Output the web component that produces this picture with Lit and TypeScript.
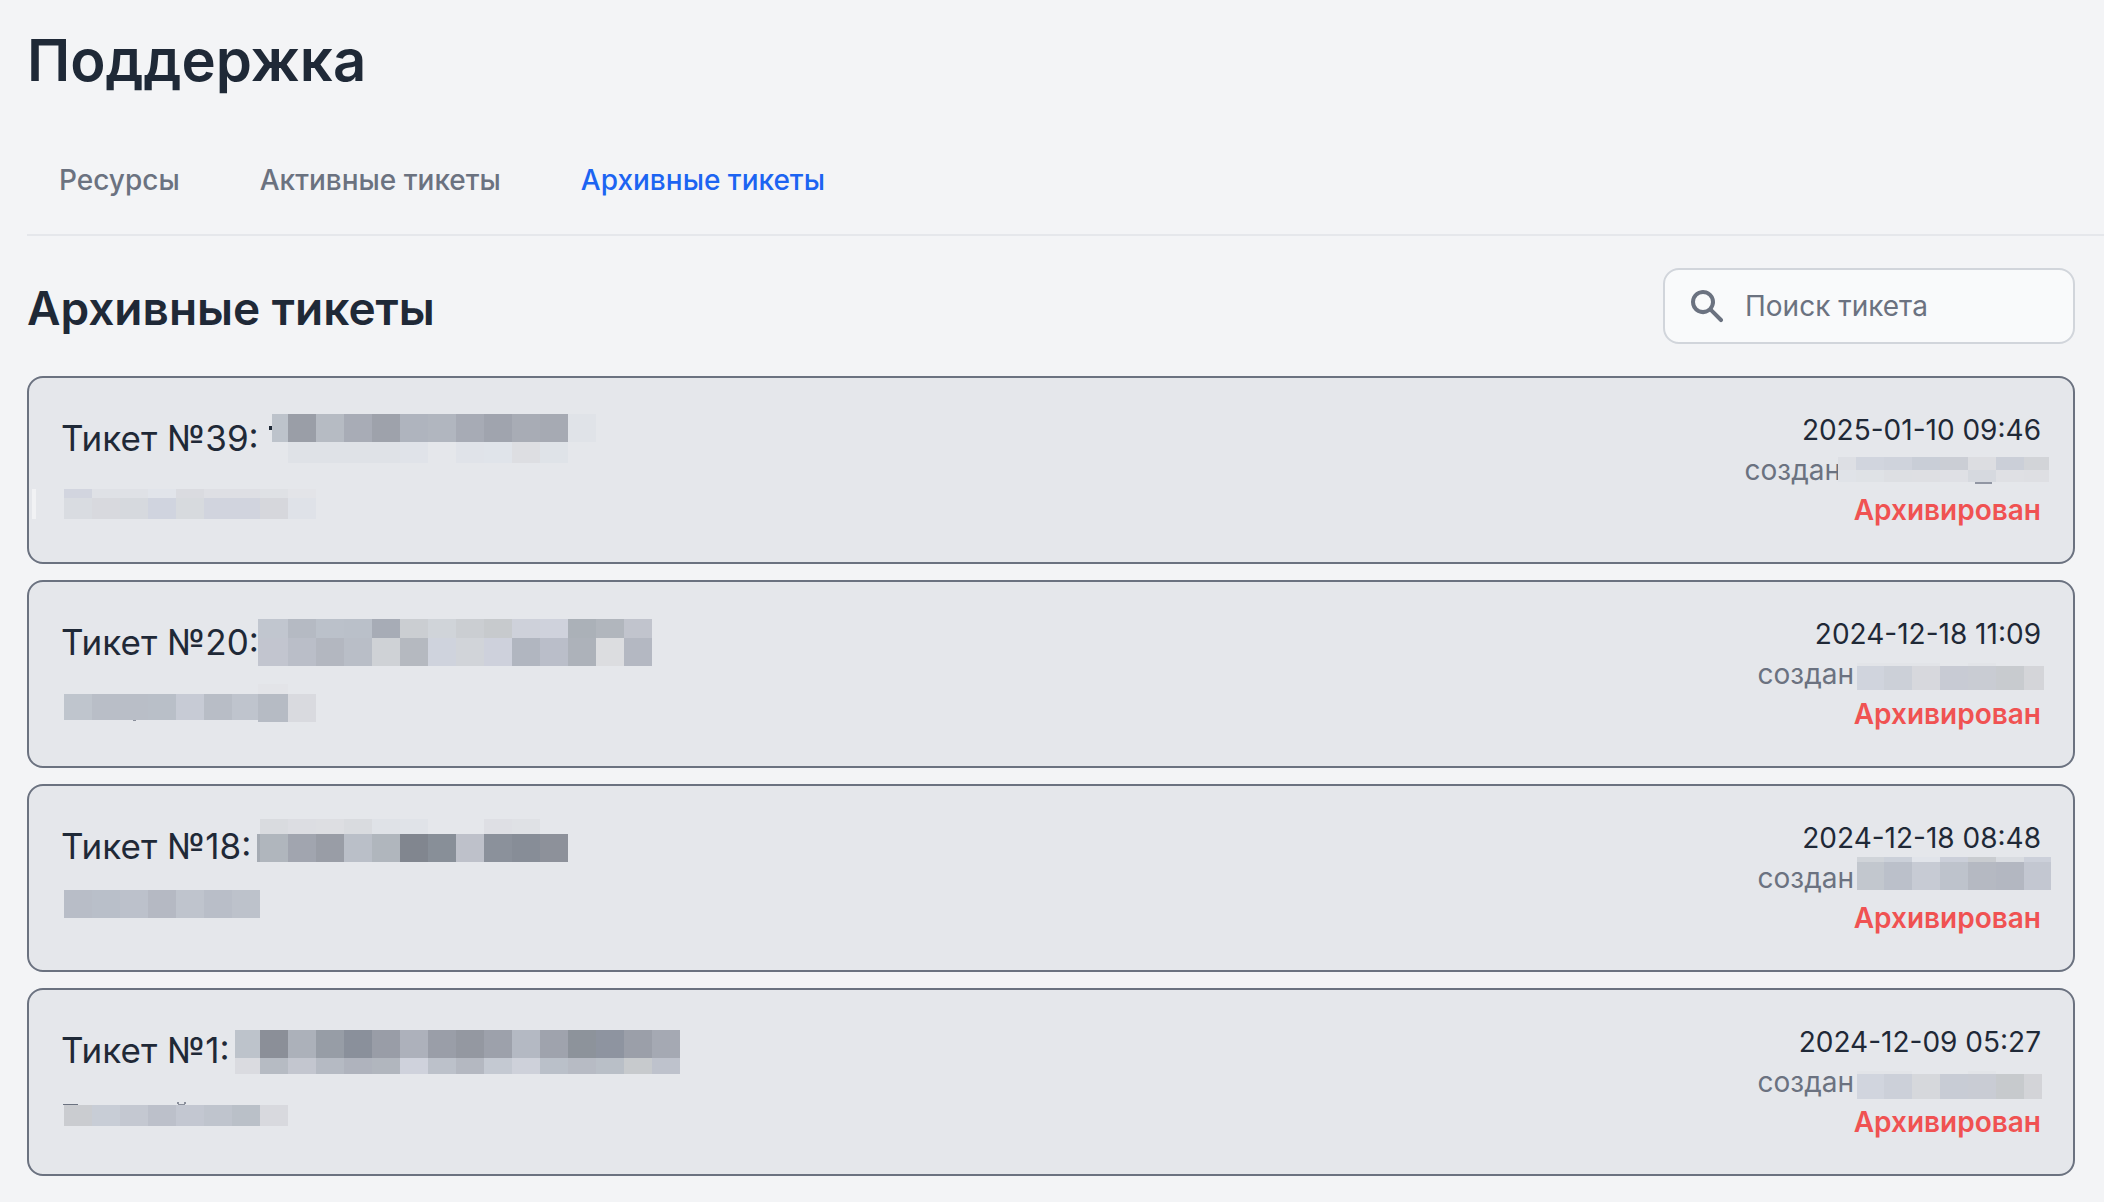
import { LitElement, html, css, svg } from "lit";
import { customElement, property, state } from "lit/decorators.js";

/** One horizontal strip of redaction blocks: x, y, height and "width#colour" cells ("28-" leaves a gap). */
type Band = [number, number, number, string];

interface Ticket {
  id: number;
  date: string;
  titleMask: Band[];
  topicMask: Band[];
  authorWidth: number;
  authorMask: Band[];
}

const TICKETS: Ticket[] = [
  {
    id: 39,
    date: "2025-01-10 09:46",
    titleMask: [
      [208, 16, 4, "3#1f2937"],
      [211, 4, 28, "16#bdc3cb 28#9a9ea7 28#b6bbc3 28#a8acb6 28#9ea2ab 28#afb4be 28#b1b6bf 28#a7abb5 28#a0a4ae 28#a8acb5 28#a6aab3 28#e0e3e8"],
      [227, 32, 21, "112#dfe2e7 28#e0e3e9 28- 28#e0e3e9 28#e0e4ea 28#dddee2 28#dfe3e8"],
    ],
    topicMask: [
      [-29, 7, 30, "4#f1f2f4"],
      [3, 7, 9, "28#d2d5df 56#dfe1e6 28#e1e4ea 28#dadbe0 56#dedfe4 28#dfe1e5 28#e3e4e8"],
      [3, 16, 21, "28#d9dce1 28#d8d9de 28#d6d9de 28#d0d4df 28#d7dade 56#d1d4de 28#d6d7dc 28#dfe2e8"],
    ],
    authorWidth: 200,
    authorMask: [
      [-3, 7, 13, "18#dddfe4 28#d1d5de 28#cfd3dc 28#c9ced7 28#cbced5 28#dcdde1 28#cbcfd8 25#d2d4d8"],
      [-3, 20, 12, "18#e0e3e8 28#dfe2e6 28#dddfe3 28#dedfe3 28#dfe0e5 28#d6d9df 28#dfe0e4 25#dedfe3"],
      [134, 32, 2, "17#9196a3"],
    ],
  },
  {
    id: 20,
    date: "2024-12-18 11:09",
    titleMask: [
      [197, 5, 19, "30#c1c6cf 28#b5bac3 28#bbc1ca 28#bac0c9 28#a7acb6 28#cbced2 28#d0d4d9 28#cbced2 28#c7cacd 28#ced1da 28#cfd2dc 28#abb1b8 28#b1b6bd 28#c1c4cd"],
      [197, 24, 28, "30#c2c5cf 28#babec8 28#b3b7c0 28#b9bec7 28#cfd2d6 28#b5b9c0 28#cfd3dd 28#d1d4d9 28#ced1dc 28#b1b6c0 28#babec9 28#adb2ba 28#dcdde0 28#b4b8c2"],
    ],
    topicMask: [
      [197, -2, 10, "30#e3e4e8"],
      [3, 8, 26, "28#bfc5cd 56#b9bec7 28#b9bfc8 28#c7cbd5 28#b8bdc6 28#bfc4cd"],
      [197, 8, 28, "30#b6bbc4 28#d9dadf"],
      [72, 34, 1, "3#8a8f9b"],
    ],
    authorWidth: 187,
    authorMask: [
      [3, 9, 3, "83#e2e4e8 28- 28#e2e4e8"],
      [3, 12, 24, "27#d0d4dd 28#ccd0d8 28#d7d8dd 28#c8cbd4 28#c9ccd3 28#c8cbcf 20#d4d5d9"],
    ],
  },
  {
    id: 18,
    date: "2024-12-18 08:48",
    titleMask: [
      [199, 1, 15, "28#d9dbdf 28#dcdde2 28#dddee2 28#d9dbdf 28#dfe2e7 28#e0e3e8 56- 28#dedfe4 28#dfe1e5"],
      [196, 16, 28, "3#a5abb3 28#b0b6bd 28#a1a5af 28#999da6 28#babfc8 28#b0b6bd 28#81868f 28#888f98 28#bec1ca 28#8b919b 28#878d97 28#8d919a"],
    ],
    topicMask: [
      [3, 0, 28, "28#b8bdc7 28#b9bfc9 28#bcc1cb 28#b5b9c3 28#bfc4cd 28#b9bec8 28#bdc2cb"],
    ],
    authorWidth: 187,
    authorMask: [
      [3, -1, 5, "27#d0d4d9 28#cbd0d9 28#e1e4ea 28#cbcfd9 28#c9ccd0 28#d9dce1 27#ccd0da"],
      [3, 4, 28, "27#c2c7ce 28#bbc0ca 28#c7cbd4 28#bec3cc 28#b5b9c2 28#b3b7c1 27#c3c7d1"],
    ],
  },
  {
    id: 1,
    date: "2024-12-09 05:27",
    titleMask: [
      [174, 8, 28, "25#bdc3cb 28#8b8f98 28#acb1ba 28#979da6 28#8a909b 28#999da7 28#adb1bb 28#9a9ea8 28#9498a1 28#9da1ab 28#b4b9c3 28#9fa3ad 28#8d939b 28#8e94a0 28#9b9fa9 28#a5a9b3"],
      [174, 36, 16, "25#dadbe0 28#b6bbc3 28#c3c6cf 28#b5bac3 28#afb3bd 28#b1b6be 28#cfd2dc 28#bcc1ca 28#b4b8c1 28#c4c9d2 28#ced1da 28#bac0c9 28#b7bbc4 28#b9bfc7 28#c7cacd 28#bec2cc"],
    ],
    topicMask: [
      [2, 10, 1, "15#6b7280"],
      [116, 8, 2, "2#8a8f9b 5- 2#8a8f9b"],
      [117, 10, 1, "7#8a8f9b"],
      [3, 11, 21, "28#caccd0 28#c8cdd6 28#c4c8d1 28#bcc0ca 28#c3c7d1 28#bfc4cd 28#bac0c8 28#d8d9de"],
    ],
    authorWidth: 187,
    authorMask: [
      [3, 9, 3, "55#e2e4e8 56- 28#e2e4e8"],
      [3, 12, 25, "27#d1d5de 28#ccd0d9 28#d6d8dc 28#c8ccd5 28#c9ccd4 28#c7cacd 18#d3d4d8"],
    ],
  },
];

const drawBand = ([left, y, height, cells]: Band) => {
  let x = left;
  return cells.split(" ").map((cell) => {
    const width = parseInt(cell, 10);
    const at = x;
    x += width;
    const hash = cell.indexOf("#");
    return hash < 0
      ? null
      : svg`<rect x=${at} y=${y} width=${width} height=${height} fill=${cell.slice(hash)}></rect>`;
  });
};

const mask = (bands: Band[], width: number) => html`
  <svg class="mask" width=${width} height="40" aria-hidden="true">${bands.map(drawBand)}</svg>
`;

@customElement("ticket-card")
export class TicketCard extends LitElement {
  @property({ attribute: false }) ticket!: Ticket;

  static styles = css`
    :host {
      display: block;
    }
    .card {
      display: flex;
      justify-content: space-between;
      align-items: flex-start;
      padding: 32px;
      border: 2px solid #6b7280;
      border-radius: 16px;
      background: #e5e7eb;
    }
    .summary {
      display: grid;
      gap: 16px;
    }
    .line {
      display: grid;
    }
    .line > * {
      grid-area: 1 / 1;
    }
    .title {
      margin: 0;
      font-size: 35px;
      line-height: 56px;
      font-weight: 400;
      color: #1f2937;
    }
    .mask {
      display: block;
      overflow: visible;
      shape-rendering: crispEdges;
    }
    .meta {
      display: grid;
      justify-items: end;
      font-size: 28px;
      line-height: 40px;
      color: #1f2937;
    }
    .author {
      display: flex;
      color: #6b7280;
    }
    .status {
      font-weight: 600;
      color: #f05252;
    }
  `;

  render() {
    const t = this.ticket;
    return html`
      <article class="card">
        <div class="summary">
          <div class="line">
            <h3 class="title">Тикет №${t.id}:</h3>
            ${mask(t.titleMask, 620)}
          </div>
          ${mask(t.topicMask, 260)}
        </div>
        <div class="meta">
          <time>${t.date}</time>
          <span class="author">создан${mask(t.authorMask, t.authorWidth)}</span>
          <span class="status">Архивирован</span>
        </div>
      </article>
    `;
  }
}

@customElement("app-root")
export class AppRoot extends LitElement {
  @state() private query = "";

  static styles = css`
    :host {
      display: block;
      box-sizing: border-box;
      min-height: 100vh;
      padding: 24px 0 24px 27px;
      background: #f3f4f6;
      color: #1f2937;
      font-family: Inter, "Liberation Sans", sans-serif;
    }
    .page-title {
      margin: 0 0 32px;
      font-size: 58px;
      line-height: 72px;
      font-weight: 600;
    }
    .tabs {
      display: flex;
      gap: 16px;
      padding-bottom: 2px;
      border-bottom: 2px solid #e5e7eb;
    }
    .tab {
      padding: 32px;
      font-size: 28px;
      line-height: 40px;
      font-weight: 500;
      color: #6b7280;
      text-decoration: none;
    }
    .tab.active {
      color: #1c64f2;
    }
    .panel {
      padding: 32px 29px 0 0;
    }
    .toolbar {
      display: flex;
      justify-content: space-between;
      align-items: center;
      margin-bottom: 32px;
    }
    .section-title {
      margin: 0;
      padding-top: 4px;
      font-size: 46px;
      line-height: 64px;
      font-weight: 600;
    }
    .search {
      display: flex;
      align-items: center;
      gap: 20px;
      box-sizing: border-box;
      width: 412px;
      height: 76px;
      padding: 0 24px;
      border: 2px solid #d1d5db;
      border-radius: 16px;
      background: #f9fafb;
    }
    .icon {
      flex: none;
      width: 36px;
      height: 36px;
      color: #6b7280;
    }
    .field {
      flex: 1;
      min-width: 0;
      padding: 0;
      border: 0;
      outline: 0;
      background: none;
      font: inherit;
      font-size: 28px;
      line-height: 40px;
      color: #1f2937;
    }
    .field::placeholder {
      color: #6b7280;
      opacity: 1;
    }
    .list {
      display: grid;
      gap: 16px;
    }
  `;

  private onInput(e: Event) {
    this.query = (e.target as HTMLInputElement).value;
  }

  render() {
    const shown = TICKETS.filter((t) => `Тикет №${t.id} ${t.date}`.includes(this.query));
    return html`
      <h1 class="page-title">Поддержка</h1>
      <nav class="tabs">
        <a class="tab" href="#resources">Ресурсы</a>
        <a class="tab" href="#active">Активные тикеты</a>
        <a class="tab active" href="#archive" aria-current="page">Архивные тикеты</a>
      </nav>
      <main class="panel">
        <div class="toolbar">
          <h2 class="section-title">Архивные тикеты</h2>
          <label class="search" for="search">
            <svg class="icon" viewBox="0 0 18 18" fill="currentColor" aria-hidden="true">
              <path
                fill-rule="evenodd"
                d="M7 3a4 4 0 100 8 4 4 0 000-8zM1 7a6 6 0 1110.89 3.48l4.82 4.81a1 1 0 01-1.42 1.42l-4.81-4.82A6 6 0 011 7z"
              ></path>
            </svg>
            <input
              id="search"
              class="field"
              type="text"
              placeholder="Поиск тикета"
              .value=${this.query}
              @input=${this.onInput}
            />
          </label>
        </div>
        <div class="list">${shown.map((t) => html`<ticket-card .ticket=${t}></ticket-card>`)}</div>
      </main>
    `;
  }
}
